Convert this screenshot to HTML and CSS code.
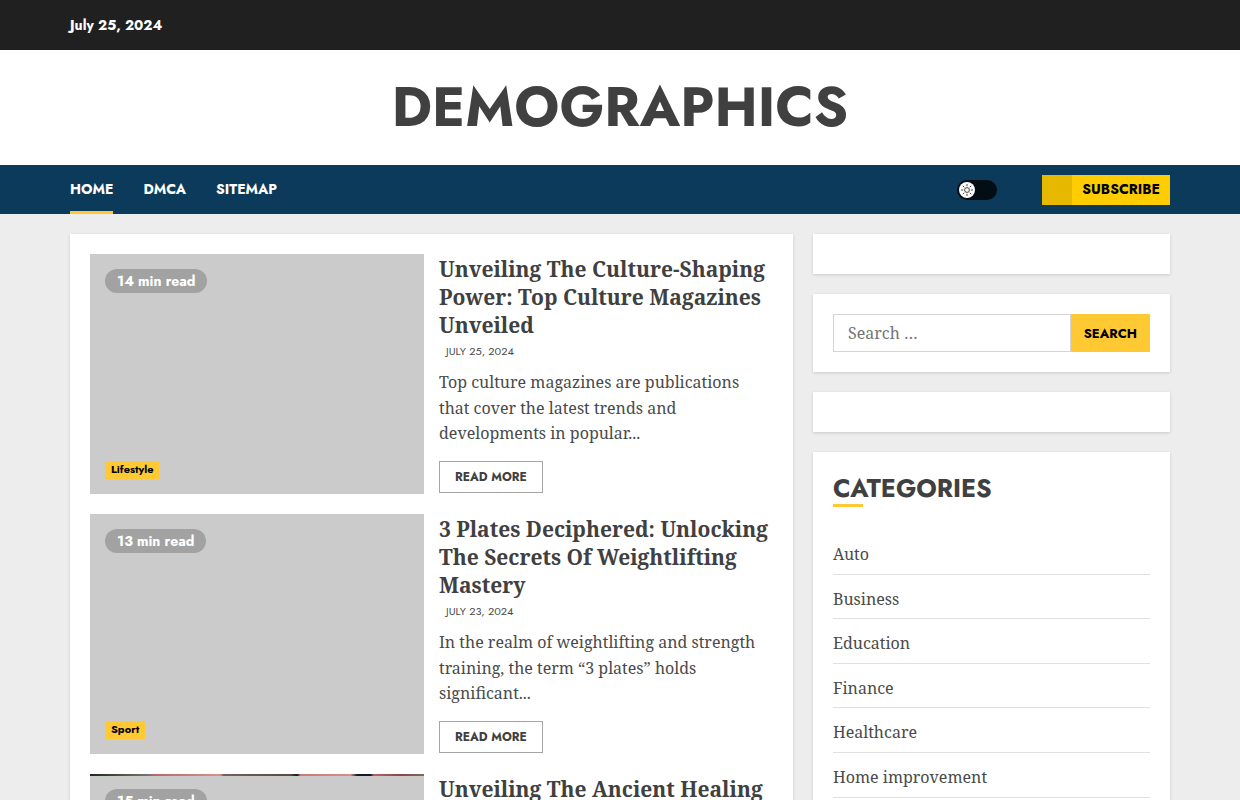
FILE: index.html
```html
<!DOCTYPE html>
<html lang="en">
<head>
    <meta charset="UTF-8">
    <meta name="viewport" content="width=device-width, initial-scale=1.0">
    <title>Demographics</title>
    <link rel="stylesheet" href="styles.css">
</head>
<body>
    <div class="top-bar">
        <div class="container">
            <span class="date">July 25, 2024</span>
        </div>
    </div>

    <header class="masthead">
        <h1 class="site-title"><a href="#">DEMOGRAPHICS</a></h1>
    </header>

    <div class="nav-bar">
        <div class="container nav-inner">
            <nav>
                <ul class="menu">
                    <li><a class="active" href="#">HOME</a></li>
                    <li><a href="#">DMCA</a></li>
                    <li><a href="#">SITEMAP</a></li>
                </ul>
            </nav>
            <div class="nav-actions">
                <label class="switch">
                    <input type="checkbox" aria-label="Dark mode">
                    <span class="knob">
                        <svg viewBox="0 0 16 16" width="16" height="16" fill="none" stroke="#444">
                            <circle cx="8" cy="8" r="2.4"/>
                            <path d="M8 2v2.2M8 11.8V14M2 8h2.2M11.8 8H14M3.8 3.8l1.5 1.5M10.7 10.7l1.5 1.5M3.8 12.2l1.5-1.5M10.7 5.3l1.5-1.5"/>
                        </svg>
                    </span>
                </label>
                <a class="subscribe" href="#"><span class="subscribe-icon"></span><span class="subscribe-text">SUBSCRIBE</span></a>
            </div>
        </div>
    </div>

    <div class="container content">
        <main class="posts">
            <article class="post">
                <div class="thumb">
                    <span class="read-time">14 min read</span>
                    <a class="category" href="#">Lifestyle</a>
                </div>
                <div class="post-body">
                    <h2><a href="#">Unveiling The Culture-Shaping Power: Top Culture Magazines Unveiled</a></h2>
                    <div class="meta">JULY 25, 2024</div>
                    <p>Top culture magazines are publications that cover the latest trends and developments in popular...</p>
                    <a class="read-more" href="#">READ MORE</a>
                </div>
            </article>

            <article class="post">
                <div class="thumb">
                    <span class="read-time">13 min read</span>
                    <a class="category" href="#">Sport</a>
                </div>
                <div class="post-body">
                    <h2><a href="#">3 Plates Deciphered: Unlocking The Secrets Of Weightlifting Mastery</a></h2>
                    <div class="meta">JULY 23, 2024</div>
                    <p>In the realm of weightlifting and strength training, the term “3 plates” holds significant...</p>
                    <a class="read-more" href="#">READ MORE</a>
                </div>
            </article>

            <article class="post">
                <div class="thumb thumb-photo">
                    <span class="read-time">15 min read</span>
                </div>
                <div class="post-body">
                    <h2><a href="#">Unveiling The Ancient Healing</a></h2>
                </div>
            </article>
        </main>

        <aside class="sidebar">
            <section class="widget"></section>
            <section class="widget">
                <form class="search">
                    <input type="search" placeholder="Search …" aria-label="Search for:">
                    <button type="submit">SEARCH</button>
                </form>
            </section>
            <section class="widget"></section>
            <section class="widget">
                <h2 class="widget-title">CATEGORIES</h2>
                <ul class="category-list">
                    <li><a href="#">Auto</a></li>
                    <li><a href="#">Business</a></li>
                    <li><a href="#">Education</a></li>
                    <li><a href="#">Finance</a></li>
                    <li><a href="#">Healthcare</a></li>
                    <li><a href="#">Home improvement</a></li>
                </ul>
            </section>
        </aside>
    </div>
</body>
</html>
```
FILE: styles.css
```css
* {
    box-sizing: border-box;
}
body {
    margin: 0;
    font-family: "Noto Serif", "Droid Serif", "Liberation Serif", serif;
    font-size: 16px;
    line-height: 1.6;
    color: #4a4a4a;
    background-color: #ededed;
}
a {
    color: inherit;
    text-decoration: none;
}
h1, h2, p, ul {
    margin: 0;
    padding: 0;
}
ul {
    list-style: none;
}
.container {
    max-width: 1140px;
    margin: 0 auto;
    padding: 0 20px;
}
.top-bar, .site-title, .menu, .subscribe, .read-time, .category,
.meta, .read-more, .search button, .widget-title {
    font-family: Jost, Lato, sans-serif;
}

/* Header */
.top-bar {
    background-color: #202020;
    color: #fff;
    font-size: 14px;
    font-weight: 700;
    line-height: 50px;
}
.masthead {
    padding: 20px;
    background-color: #fff;
    text-align: center;
}
.site-title {
    font-size: 55px;
    font-weight: 700;
    line-height: 75px;
    color: #404040;
}
.nav-bar {
    background-color: #0c3a5a;
}
.nav-inner {
    display: flex;
    justify-content: space-between;
    align-items: center;
}
.menu {
    display: flex;
    gap: 30px;
}
.menu a {
    display: block;
    padding-top: 2px;
    border-bottom: 3px solid transparent;
    color: #fff;
    font-size: 14px;
    font-weight: 700;
    line-height: 44px;
}
.menu .active {
    border-color: #ffc934;
}
.nav-actions {
    display: flex;
    align-items: center;
    gap: 45px;
}
.switch {
    display: flex;
    align-items: center;
    width: 40px;
    height: 20px;
    padding: 2px;
    border-radius: 10px;
    background-color: #020d14;
    cursor: pointer;
}
.switch input {
    width: 0;
    height: 0;
    margin: 0;
    appearance: none;
}
.knob {
    width: 16px;
    height: 16px;
    border-radius: 50%;
    background-color: #fff;
}
.knob svg {
    display: block;
}
.switch input:checked + .knob {
    margin-left: auto;
}
.subscribe {
    display: flex;
    background-color: #ffcc00;
    color: #000;
    font-size: 14px;
    font-weight: 700;
    line-height: 28px;
    height: 30px;
}
.subscribe-icon {
    width: 30px;
    background-color: #e6b800;
}
.subscribe-text {
    padding: 0 10px;
}

/* Content */
.content {
    display: grid;
    grid-template-columns: minmax(0, 723fr) minmax(0, 357fr);
    gap: 20px;
    padding-top: 20px;
    padding-bottom: 20px;
}
.posts, .widget {
    padding: 20px;
    background-color: #fff;
    box-shadow: 0 1px 3px rgba(0, 0, 0, 0.15);
}
.posts {
    display: flex;
    flex-direction: column;
    gap: 20px;
}
.post {
    display: grid;
    grid-template-columns: 1fr 1fr;
    gap: 15px;
    min-height: 240px;
}
.thumb {
    display: flex;
    flex-direction: column;
    justify-content: space-between;
    align-items: flex-start;
    padding: 15px;
    background-color: #cbcbcb;
}
.thumb-photo {
    background-image: linear-gradient(to right, #1c2a1c, #7d7670 18%, #b5676a 19%, #d9908c 39%, #75605a 40%, #5c4a44 60%, #10181a 62%, #c97878 63%, #d98e8a 78%, #141a26 80%, #141a26 84%, #b86464 85%, #8a4646 93%, #7d6a60);
    background-size: 100% 2px;
    background-repeat: no-repeat;
}
.read-time {
    padding: 0 12px;
    border-radius: 12px;
    background-color: #a2a2a2;
    color: #fff;
    font-size: 14px;
    font-weight: 700;
    line-height: 24px;
}
.category {
    padding: 0 6px 2px;
    background-color: #ffc934;
    color: #000;
    font-size: 11px;
    font-weight: 700;
    line-height: 16px;
}
.post-body h2 {
    padding-top: 1px;
    color: #404040;
    font-size: 21px;
    font-weight: 700;
    line-height: 28px;
}
.meta {
    padding: 2px 7px 9px;
    font-size: 11px;
    line-height: 20px;
}
.post-body p {
    margin-bottom: 14px;
}
.read-more {
    display: inline-block;
    padding: 0 15px;
    border: 1px solid #a5a5a5;
    color: #404040;
    font-size: 12px;
    font-weight: 700;
    line-height: 30px;
}

/* Sidebar */
.sidebar {
    display: flex;
    flex-direction: column;
    gap: 20px;
}
.search {
    display: flex;
}
.search input {
    flex: 1;
    min-width: 0;
    height: 38px;
    padding: 0 14px;
    border: 1px solid #d4d4d4;
    border-radius: 0;
    font: inherit;
    appearance: none;
}
.search input::placeholder {
    color: #757575;
}
.search button {
    padding: 0 13px;
    border: 0;
    background-color: #ffc934;
    color: #000;
    font-size: 13px;
    font-weight: 700;
    cursor: pointer;
}
.widget-title {
    margin-bottom: 23px;
    color: #404040;
    font-size: 25px;
    font-weight: 700;
    line-height: 32px;
}
.widget-title::after {
    content: "";
    display: block;
    width: 30px;
    height: 3px;
    background-color: #ffc934;
}
.category-list li {
    padding: 12px 0 6px;
    border-bottom: 1px solid #e0e0e0;
}
```
